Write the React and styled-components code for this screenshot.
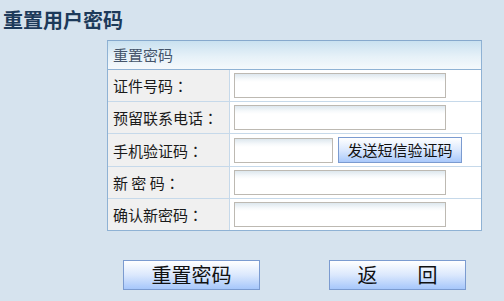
import React from "react";
import styled, { createGlobalStyle } from "styled-components";

const Global = createGlobalStyle`
  html, body { margin: 0; padding: 0; background: #d6e3ee; }
  body { font-family: "Noto Sans CJK SC", "Noto Sans", sans-serif; width: 504px; height: 301px; overflow: hidden; }
  * { box-sizing: border-box; }
`;

const Page = styled.div`
  display: flex;
  flex-direction: column;
`;

const Title = styled.h1`
  margin: 0;
  padding-left: 3px;
  height: 40px;
  line-height: 40px;
  font-size: 20px;
  font-weight: 700;
  color: #1d3a5a;
`;

const Panel = styled.div`
  margin-left: 107px;
  width: 375px;
  border: 1px solid #8fb2d4;
  border-top-color: #86a9cd;
  background: #ffffff;
`;

const PanelHeader = styled.div`
  height: 29px;
  line-height: 28px;
  padding-left: 5px;
  font-size: 15px;
  color: #44546a;
  background: linear-gradient(to bottom, #c9e1f0 0%, #e6f1f8 55%, #f5f9fc 100%);
  border-bottom: 1px solid #8fb2d4;
`;

const Row = styled.div`
  display: flex;
  height: ${(p) => p.$h || 32}px;
  border-bottom: ${(p) => (p.$last ? "none" : "1px solid #c6d9ea")};
`;

const Label = styled.div`
  width: 122px;
  flex: none;
  background: #f0f0f0;
  border-right: 1px solid #c6d9ea;
  padding-left: 5px;
  display: flex;
  align-items: center;
  font-size: 15px;
  color: #1a1a1a;
  white-space: pre;
`;

const Colon = styled.span`
  font-family: "Noto Sans CJK JP", "Noto Sans CJK SC", sans-serif;
`;

const Value = styled.div`
  flex: 1;
  display: flex;
  align-items: center;
  padding-left: 4px;
  gap: 5px;
`;

const Input = styled.input`
  width: ${(p) => p.$w || 212}px;
  height: 25px;
  border: 1px solid #bdb9b2;
  background: linear-gradient(to bottom, #dde7ee 0px, #f6f9fb 5px, #ffffff 8px);
  outline: none;
  padding: 0 3px;
  font-size: 14px;
`;

const SmallButton = styled.button`
  width: 124px;
  height: 26px;
  padding: 0;
  border: 1px solid #7b9bd0;
  background: linear-gradient(to bottom, #ffffff 0%, #dbe8fd 50%, #a9c9fb 100%);
  font-family: "Noto Sans CJK SC", sans-serif;
  font-size: 15px;
  color: #111;
  line-height: 24px;
`;

const Actions = styled.div`
  display: flex;
  gap: 69px;
  padding-left: 123px;
  margin-top: 29px;
`;

const BigButton = styled.button`
  width: 137px;
  height: 30px;
  padding: 0;
  border: 1px solid #7b9bd0;
  background: linear-gradient(to bottom, #ffffff 0%, #dbe8fd 50%, #a6c7fb 100%);
  font-family: "Noto Sans CJK SC", sans-serif;
  font-size: 20px;
  color: #111;
  line-height: 28px;
  white-space: pre;
`;

const fields = [
  { label: "证件号码" },
  { label: "预留联系电话" },
  { label: "手机验证码", sms: true, h: 33 },
  { label: "新 密 码" },
  { label: "确认新密码", h: 31, last: true },
];

export default function App() {
  return (
    <>
      <Global />
      <Page>
        <Title>重置用户密码</Title>
        <Panel>
          <PanelHeader>重置密码</PanelHeader>
          {fields.map((f) => (
            <Row key={f.label} $h={f.h} $last={f.last}>
              <Label>
                {f.label}
                <Colon>：</Colon>
              </Label>
              <Value>
                {f.sms ? (
                  <>
                    <Input $w={99} />
                    <SmallButton>发送短信验证码</SmallButton>
                  </>
                ) : (
                  <Input />
                )}
              </Value>
            </Row>
          ))}
        </Panel>
        <Actions>
          <BigButton>重置密码</BigButton>
          <BigButton>返　　回</BigButton>
        </Actions>
      </Page>
    </>
  );
}
